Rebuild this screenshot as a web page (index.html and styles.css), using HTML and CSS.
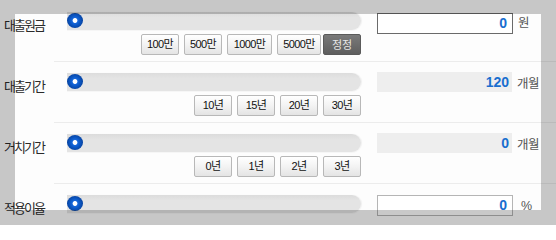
FILE: index.html
```html
<!DOCTYPE html>
<html lang="ko">
<head>
<meta charset="utf-8">
<title>대출 계산기</title>
<link rel="stylesheet" href="styles.css">
</head>
<body>
<div class="page">
  <div class="calc">
    <div class="row">
      <div class="label">대출원금</div>
      <div class="body">
        <div class="slider-col">
          <div class="track"><span class="knob"></span></div>
          <div class="btns">
            <button class="btn">100만</button>
            <button class="btn">500만</button>
            <button class="btn wide">1000만</button>
            <button class="btn wide2">5000만</button>
            <button class="btn dark">정정</button>
          </div>
        </div>
        <div class="value-col">
          <div class="box input focus">0</div>
          <span class="unit">원</span>
        </div>
      </div>
    </div>
    <div class="row">
      <div class="label">대출기간</div>
      <div class="body">
        <div class="slider-col">
          <div class="track"><span class="knob"></span></div>
          <div class="btns">
            <button class="btn">10년</button>
            <button class="btn">15년</button>
            <button class="btn">20년</button>
            <button class="btn">30년</button>
          </div>
        </div>
        <div class="value-col">
          <div class="box readonly">120</div>
          <span class="unit">개월</span>
        </div>
      </div>
    </div>
    <div class="row">
      <div class="label">거치기간</div>
      <div class="body">
        <div class="slider-col">
          <div class="track"><span class="knob"></span></div>
          <div class="btns">
            <button class="btn">0년</button>
            <button class="btn">1년</button>
            <button class="btn">2년</button>
            <button class="btn">3년</button>
          </div>
        </div>
        <div class="value-col">
          <div class="box readonly">0</div>
          <span class="unit">개월</span>
        </div>
      </div>
    </div>
    <div class="row">
      <div class="label">적용이율</div>
      <div class="body">
        <div class="slider-col">
          <div class="track"><span class="knob"></span></div>
        </div>
        <div class="value-col">
          <div class="box input light">0</div>
          <span class="unit pct">%</span>
        </div>
      </div>
    </div>
  </div>
  <div class="spotlight"></div>
</div>
</body>
</html>
```

FILE: styles.css
```css
html, body {
  margin: 0;
  padding: 0;
  background: #ffffff;
}

.page {
  position: relative;
  width: 556px;
  height: 225px;
  overflow: hidden;
  background: #fdfdfd;
  font-family: "Noto Sans CJK KR", "Noto Sans", sans-serif;
}

.calc {
  display: flex;
  flex-direction: column;
  padding-top: 1px;
}

.row {
  display: flex;
  height: 61px;
}

.label {
  width: 50px;
  padding-left: 4px;
  padding-top: 16px;
  font-size: 13px;
  line-height: 16px;
  letter-spacing: -2px;
  color: #2a2a2a;
  white-space: nowrap;
}

.body {
  flex: 1;
  display: flex;
  border-bottom: 1px solid #ececec;
  padding-left: 13px;
  padding-top: 11px;
  box-sizing: border-box;
}

.slider-col {
  width: 294px;
  display: flex;
  flex-direction: column;
}

.track {
  position: relative;
  height: 18px;
  background: linear-gradient(#dcdcdc, #e4e4e4 30%, #e4e4e4);
  border-radius: 0 9px 9px 0;
  box-shadow: 0 1px 0 #f6f6f6, 1px 0 1px #efefef;
}

.knob {
  position: absolute;
  left: 0;
  top: 1px;
  width: 16px;
  height: 15px;
  border-radius: 50%;
  background: radial-gradient(circle at 50% 50%, #ffffff 0, #ffffff 2px, #1767da 2.8px, #0b57c4 5px, #0846a6 7.5px);
}

.btns {
  display: flex;
  justify-content: flex-end;
  gap: 5px;
  margin-top: 4px;
}

.btn {
  height: 21px;
  width: 38px;
  padding: 0;
  border: 1px solid #b8b8b8;
  border-radius: 2px;
  background: linear-gradient(#ffffff, #f3f3f3 50%, #e4e4e4);
  font-family: "Liberation Sans", "Noto Sans CJK KR", sans-serif;
  font-size: 11px;
  letter-spacing: -0.6px;
  color: #111111;
  line-height: 19px;
}

.btn.wide {
  width: 45px;
}

.btn.wide2 {
  width: 44px;
}

.btn.dark {
  margin-left: -3px;
  background: linear-gradient(#7a7a7a, #5e5e5e);
  border-color: #5a5a5a;
  color: #e8e8e8;
  font-family: "Noto Sans CJK KR", sans-serif;
  letter-spacing: 0;
}

.value-col {
  display: flex;
  align-items: flex-start;
  margin-left: 16px;
}

.box {
  width: 136px;
  height: 21px;
  box-sizing: border-box;
  text-align: right;
  padding-right: 5px;
  font-family: "Liberation Sans", Arial, sans-serif;
  font-weight: bold;
  font-size: 14px;
  line-height: 20px;
  color: #1a6ecf;
  background: #ffffff;
}

.box.input {
  border: 1px solid #6a6a6a;
  line-height: 19px;
  margin-top: 1px;
}

.box.input.light {
  border-color: #b5b5b5;
  margin-top: 0;
}

.box.readonly {
  background: #eeeeee;
  height: 20px;
  width: 135px;
  margin-top: -1px;
  padding-right: 3px;
}

.unit {
  margin-left: 5px;
  margin-top: 2px;
  font-size: 12.5px;
  line-height: 16px;
  letter-spacing: -0.5px;
  color: #555555;
}

.unit.pct {
  margin-left: 8px;
  margin-top: 3px;
  font-family: "Liberation Sans", sans-serif;
}

.spotlight {
  position: absolute;
  left: 15px;
  top: 14px;
  width: 526px;
  height: 196px;
  box-shadow: 0 0 0 700px rgba(0, 0, 0, 0.21);
  pointer-events: none;
}
```
